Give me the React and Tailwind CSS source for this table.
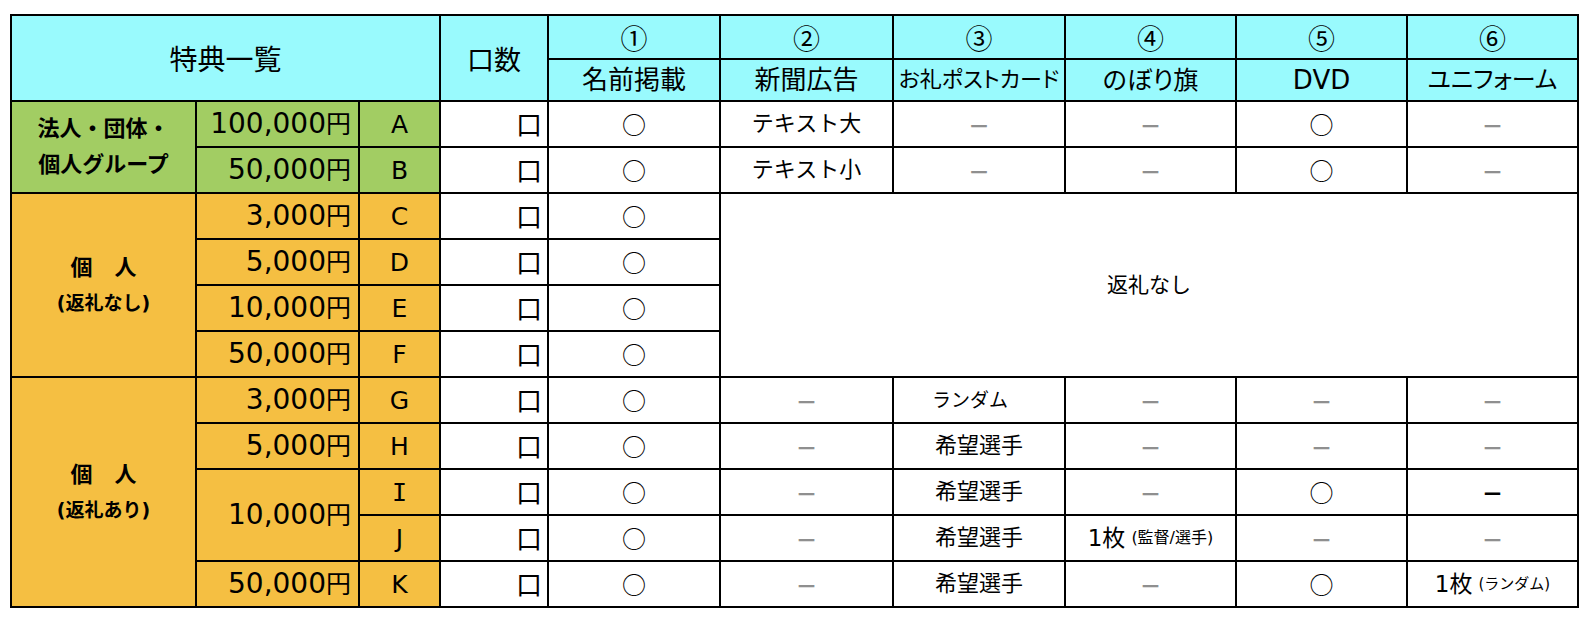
import React from "react";

const cyan = "bg-[#99fafd]";
const green = "bg-[#a2cd63]";
const orange = "bg-[#f5bf42]";

function C({ className = "", children }) {
  return <div className={`flex items-center leading-none ${className}`}>{children}</div>;
}

const Dash = ({ dark }) =>
  dark ? (
    <span className="font-['Noto_Sans_CJK_JP'] text-[22px] font-black text-black">－</span>
  ) : (
    <span className="font-['Noto_Sans_CJK_JP'] text-[22px] font-bold text-[#8f8f8f]">－</span>
  );

const Maru = () => <span className="font-['Noto_Sans_CJK_JP'] text-[24px]">○</span>;

const W = ({ children, className = "" }) => (
  <C className={`bg-white justify-center ${className}`}>{children}</C>
);

const Amount = ({ value, bg, span = "" }) => (
  <C className={`${bg} ${span} justify-end pr-[7px]`}>
    <span className="text-[28px]">{value}</span>
    <span className="text-[25px]">円</span>
  </C>
);

const Letter = ({ bg, children, serif }) => (
  <C className={`${bg} justify-center text-[25px] ${serif ? "font-['DejaVu_Sans_Mono']" : ""}`}>{children}</C>
);

const Kuchi = () => (
  <C className="bg-white justify-end pr-[5px] font-['Noto_Sans_CJK_JP'] text-[26px]">口</C>
);

const Head = ({ children, className = "" }) => (
  <C className={`${cyan} justify-center ${className}`}>{children}</C>
);

export default function App() {
  return (
    <div className="w-[1590px] h-[618px] bg-white pt-[14px] pl-[10px] font-['DejaVu_Sans','Noto_Sans_CJK_JP',sans-serif] text-black">
      <div className="grid w-fit grid-cols-[183px_161px_79px_106px_170px_171px_170px_169px_169px_169px] grid-rows-[42px_40px_repeat(11,44px)] gap-[2px] bg-black p-[2px]">
        {/* header */}
        <Head className="col-span-3 row-span-2 text-[28px] font-['Noto_Sans_CJK_JP']">特典一覧</Head>
        <Head className="row-span-2 text-[27px] font-['Noto_Sans_CJK_JP']">口数</Head>
        {["①", "②", "③", "④", "⑤", "⑥"].map((n) => (
          <Head key={n} className="text-[27px] font-['Noto_Sans_CJK_JP']">{n}</Head>
        ))}
        <Head className="text-[26px]">名前掲載</Head>
        <Head className="text-[26px]">新聞広告</Head>
        <Head className="text-[22px] [font-feature-settings:'palt']">お礼ポストカード</Head>
        <Head className="text-[25px] [font-feature-settings:'palt']">のぼり旗</Head>
        <Head className="text-[26px]">DVD</Head>
        <Head className="text-[24px] [font-feature-settings:'palt']">ユニフォーム</Head>

        {/* A */}
        <C className={`${green} row-span-2 flex-col justify-center gap-[14px] font-bold text-[22px]`}>
          <span>法人・団体・</span>
          <span>個人グループ</span>
        </C>
        <Amount bg={green} value="100,000" />
        <Letter bg={green}>A</Letter>
        <Kuchi />
        <W><Maru /></W>
        <W className="text-[22px]">テキスト大</W>
        <W><Dash /></W>
        <W><Dash /></W>
        <W><Maru /></W>
        <W><Dash /></W>

        {/* B */}
        <Amount bg={green} value="50,000" />
        <Letter bg={green}>B</Letter>
        <Kuchi />
        <W><Maru /></W>
        <W className="text-[22px]">テキスト小</W>
        <W><Dash /></W>
        <W><Dash /></W>
        <W><Maru /></W>
        <W><Dash /></W>

        {/* C-F */}
        <C className={`${orange} row-span-4 flex-col justify-center gap-[15px] font-bold`}>
          <span className="text-[22px]">個　人</span>
          <span className="text-[19px]">(返礼なし)</span>
        </C>
        <Amount bg={orange} value="3,000" />
        <Letter bg={orange}>C</Letter>
        <Kuchi />
        <W><Maru /></W>
        <W className="col-span-5 row-span-4 text-[21px]">返礼なし</W>

        <Amount bg={orange} value="5,000" />
        <Letter bg={orange}>D</Letter>
        <Kuchi />
        <W><Maru /></W>

        <Amount bg={orange} value="10,000" />
        <Letter bg={orange}>E</Letter>
        <Kuchi />
        <W><Maru /></W>

        <Amount bg={orange} value="50,000" />
        <Letter bg={orange}>F</Letter>
        <Kuchi />
        <W><Maru /></W>

        {/* G-K */}
        <C className={`${orange} row-span-5 flex-col justify-center gap-[15px] font-bold`}>
          <span className="text-[22px]">個　人</span>
          <span className="text-[19px]">(返礼あり)</span>
        </C>
        <Amount bg={orange} value="3,000" />
        <Letter bg={orange}>G</Letter>
        <Kuchi />
        <W><Maru /></W>
        <W><Dash /></W>
        <W className="text-[19px] pr-[18px]">ランダム</W>
        <W><Dash /></W>
        <W><Dash /></W>
        <W><Dash /></W>

        <Amount bg={orange} value="5,000" />
        <Letter bg={orange}>H</Letter>
        <Kuchi />
        <W><Maru /></W>
        <W><Dash /></W>
        <W className="text-[22px]">希望選手</W>
        <W><Dash /></W>
        <W><Dash /></W>
        <W><Dash /></W>

        <Amount bg={orange} value="10,000" span="row-span-2" />
        <Letter bg={orange} serif>I</Letter>
        <Kuchi />
        <W><Maru /></W>
        <W><Dash /></W>
        <W className="text-[22px]">希望選手</W>
        <W><Dash /></W>
        <W><Maru /></W>
        <W><Dash dark /></W>

        <Letter bg={orange}>J</Letter>
        <Kuchi />
        <W><Maru /></W>
        <W><Dash /></W>
        <W className="text-[22px]">希望選手</W>
        <W className="items-baseline">
          <span className="text-[23px]">1枚</span>
          <span className="ml-[6px] text-[16px]">(監督/選手)</span>
        </W>
        <W><Dash /></W>
        <W><Dash /></W>

        <Amount bg={orange} value="50,000" />
        <Letter bg={orange}>K</Letter>
        <Kuchi />
        <W><Maru /></W>
        <W><Dash /></W>
        <W className="text-[22px]">希望選手</W>
        <W><Dash /></W>
        <W><Maru /></W>
        <W className="items-baseline">
          <span className="text-[23px]">1枚</span>
          <span className="ml-[6px] text-[15px]">(ランダム)</span>
        </W>
      </div>
    </div>
  );
}
